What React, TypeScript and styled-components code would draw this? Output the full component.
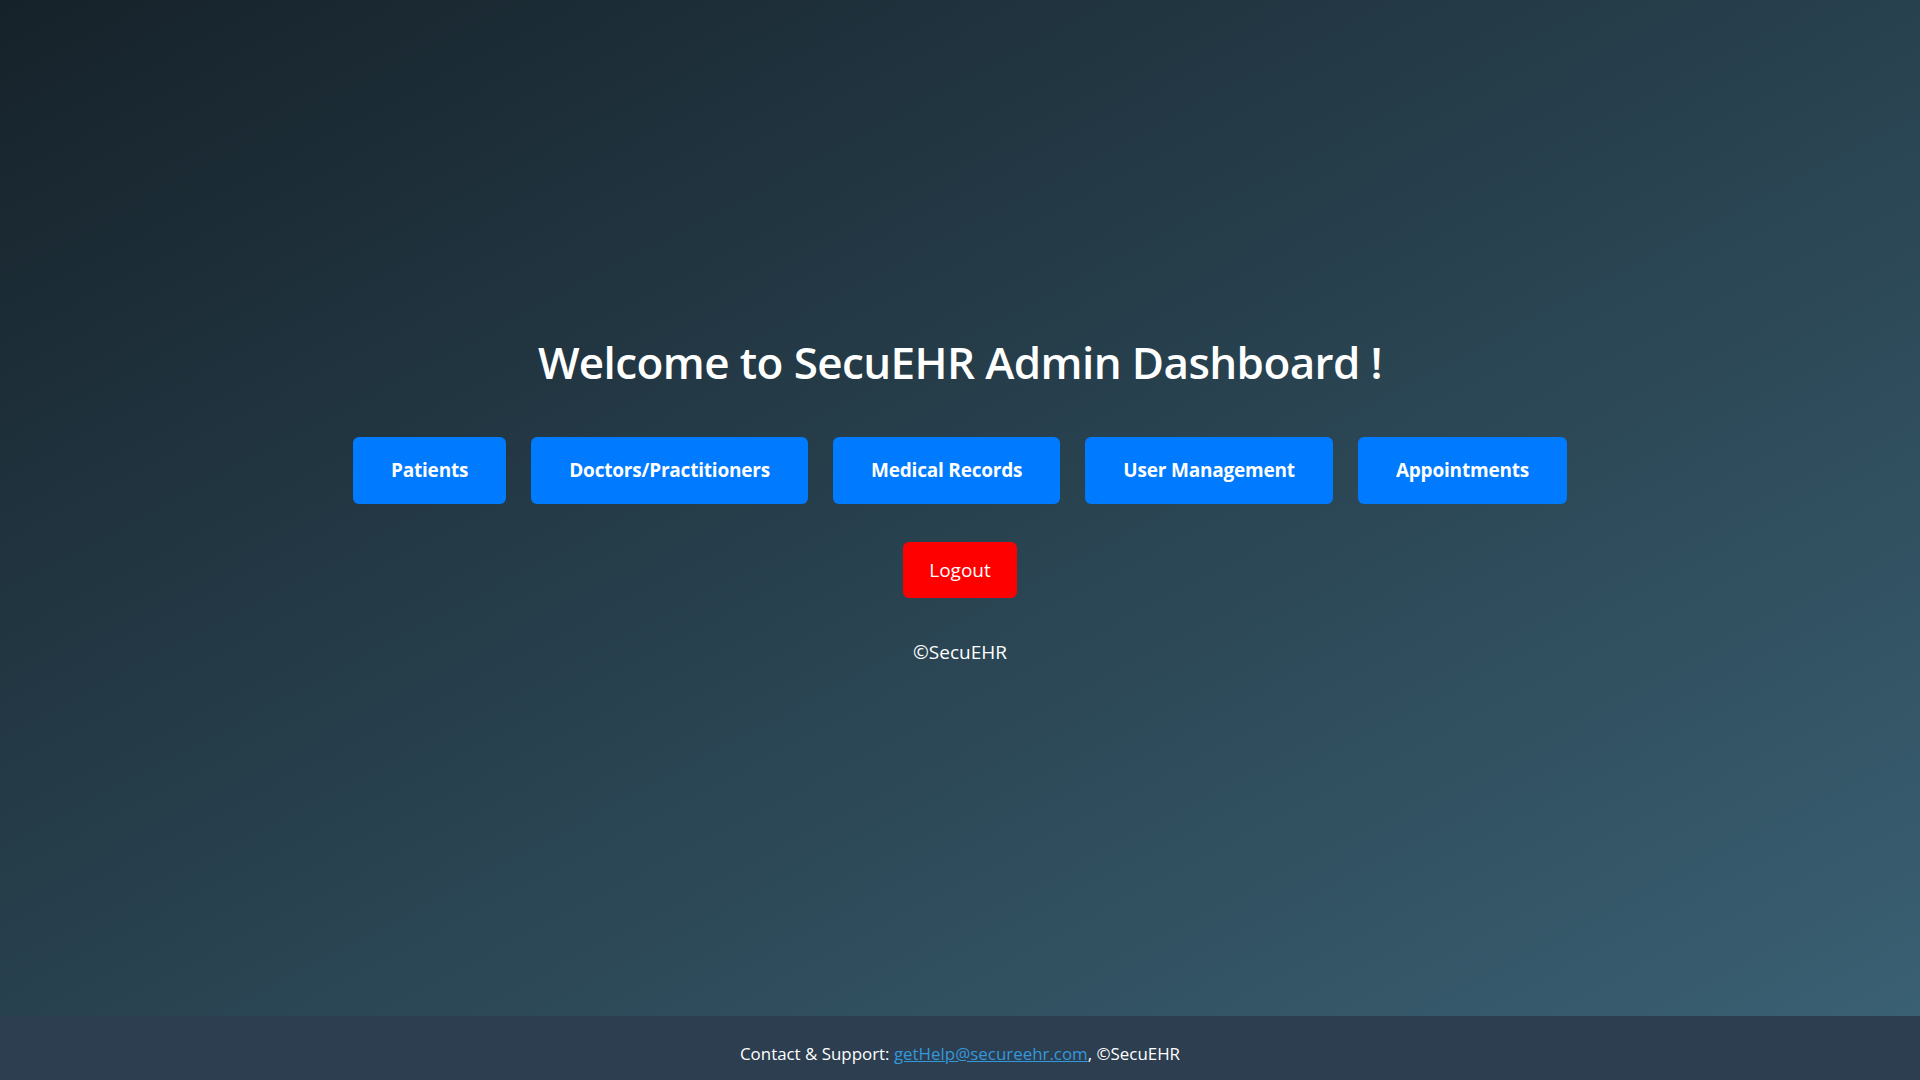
import React from "react";
import styled, { createGlobalStyle } from "styled-components";

const GlobalStyle = createGlobalStyle`
  html, body {
    margin: 0;
    padding: 0;
  }
  body {
    font-family: "Segoe UI", "Open Sans", "Noto Sans", sans-serif;
    color: #ffffff;
  }
  * { box-sizing: border-box; }
`;

const Page = styled.div`
  min-height: 100vh;
  display: flex;
  flex-direction: column;
  background: #2c3e50;
`;

const Main = styled.main`
  flex: 1;
  display: flex;
  flex-direction: column;
  align-items: center;
  justify-content: center;
  background: linear-gradient(to bottom right, #16222a, #3a6073);
  padding-bottom: 16px;
`;

const Title = styled.h1`
  margin: 0 0 48px;
  font-size: 44px;
  font-weight: 600;
  line-height: 1.2;
  letter-spacing: -0.6px;
  color: #ffffff;
`;

const ButtonRow = styled.nav`
  display: flex;
  gap: 25px;
`;

const NavButton = styled.button`
  height: 67px;
  padding: 0 38px;
  border: none;
  border-radius: 6px;
  background: #007bff;
  color: #ffffff;
  font-family: inherit;
  font-size: 19px;
  font-weight: 700;
  letter-spacing: -0.2px;
  cursor: pointer;
`;

const LogoutButton = styled.button`
  margin-top: 38px;
  height: 56px;
  padding: 0 26px;
  border: none;
  border-radius: 6px;
  background: #ff0000;
  color: #ffffff;
  font-family: inherit;
  font-size: 19px;
  font-weight: 400;
  cursor: pointer;
`;

const Copyright = styled.p`
  margin: 42px 0 0;
  font-size: 19px;
  line-height: 1.3;
  color: #ffffff;
`;

const Footer = styled.footer`
  height: 64px;
  display: flex;
  align-items: center;
  justify-content: center;
  padding-top: 10px;
  background: #2c3e50;
  font-size: 16.9px;
  color: #ffffff;
`;

const MailLink = styled.a`
  color: #3498db;
  text-decoration: underline;
`;

const navItems = [
  "Patients",
  "Doctors/Practitioners",
  "Medical Records",
  "User Management",
  "Appointments",
];

export default function App() {
  return (
    <>
      <GlobalStyle />
      <Page>
        <Main>
          <Title>Welcome to SecuEHR Admin Dashboard !</Title>
          <ButtonRow>
            {navItems.map((label) => (
              <NavButton key={label}>{label}</NavButton>
            ))}
          </ButtonRow>
          <LogoutButton>Logout</LogoutButton>
          <Copyright>©SecuEHR</Copyright>
        </Main>
        <Footer>
          <span>
            Contact &amp; Support:{" "}
            <MailLink href="mailto:getHelp@secureehr.com">getHelp@secureehr.com</MailLink>, ©SecuEHR
          </span>
        </Footer>
      </Page>
    </>
  );
}
